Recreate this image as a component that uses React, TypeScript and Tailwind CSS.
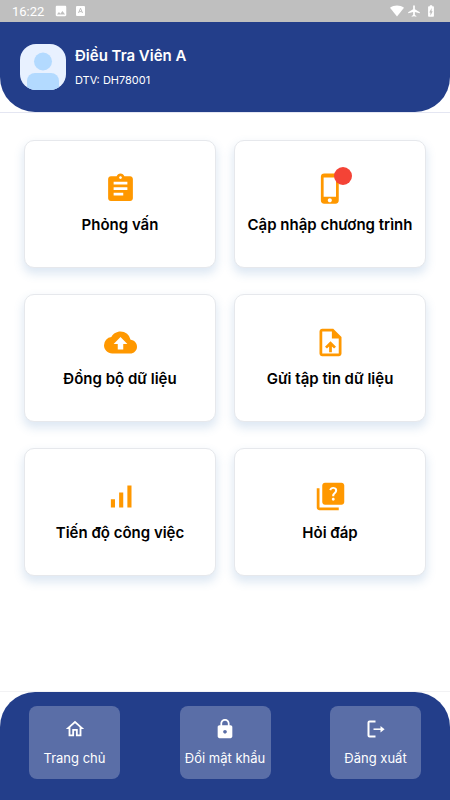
import React from 'react';
import type { IconType } from 'react-icons';
import {
  MdAirplanemodeActive,
  MdAssignment,
  MdBatteryChargingFull,
  MdCloudUpload,
  MdImage,
  MdLock,
  MdOutlineHome,
  MdPhoneIphone,
  MdQuiz,
  MdSignalCellularAlt,
  MdUploadFile,
} from 'react-icons/md';

interface MenuItem {
  label: string;
  icon: IconType;
  hasUpdate?: boolean;
}

const MENU_ITEMS: MenuItem[] = [
  { label: 'Phỏng vấn', icon: MdAssignment },
  { label: 'Cập nhập chương trình', icon: MdPhoneIphone, hasUpdate: true },
  { label: 'Đồng bộ dữ liệu', icon: MdCloudUpload },
  { label: 'Gửi tập tin dữ liệu', icon: MdUploadFile },
  { label: 'Tiến độ công việc', icon: MdSignalCellularAlt },
  { label: 'Hỏi đáp', icon: MdQuiz },
];

const LogoutIcon: React.FC = () => (
  <svg width="22" height="22" viewBox="0 0 22 22" fill="none" stroke="currentColor" strokeWidth="2">
    <path d="M10.500 3.500H4.500a1 1 0 0 0-1 1v13a1 1 0 0 0 1 1h6" />
    <path d="M8.500 11.200H17" strokeWidth="1.500" />
    <path d="M15.500 8 19.600 11.200l-4.100 3.200z" fill="currentColor" stroke="none" />
  </svg>
);

const StatusBar: React.FC = () => (
  <div className="flex h-[22px] items-center justify-between bg-[#bfbfbf] px-3 text-white">
    <div className="flex items-center gap-2.5">
      <span className="font-[Roboto,sans-serif] text-[13px] leading-none">16:22</span>
      <div className="flex items-center gap-1.5">
        <MdImage size={14} />
        <svg width="14" height="14" viewBox="0 0 14 14">
          <rect x="2" y="2" width="9" height="10" rx="1" fill="currentColor" />
          <path d="M4.500 9 6.500 4.200 8.500 9M5.200 7.600h2.600" fill="none" stroke="#bfbfbf" strokeWidth="1" />
        </svg>
      </div>
    </div>
    <div className="flex items-center gap-[3px]">
      <svg width="14" height="14" viewBox="0 0 14 14">
        <path d="M0 3.800C4 .6 10 .6 14 3.800L7 12.500z" fill="currentColor" />
      </svg>
      <MdAirplanemodeActive size={14} />
      <MdBatteryChargingFull size={14} />
    </div>
  </div>
);

const Avatar: React.FC = () => (
  <svg width="46" height="46" viewBox="0 0 46 46" className="rounded-2xl bg-[#e8f1ff]">
    <circle cx="23" cy="17.500" r="9" fill="#b3daff" />
    <path d="M7 46v-9a8 8 0 0 1 8-8h16a8 8 0 0 1 8 8v9z" fill="#b3daff" />
  </svg>
);

const MenuCard: React.FC<{ item: MenuItem }> = ({ item }) => {
  const Icon = item.icon;

  return (
    <button
      type="button"
      className="flex h-32 flex-col items-center gap-2 rounded-[10px] border border-[#e6e8ec] bg-white pt-[31px] shadow-[0_5px_10px_1px_rgba(70,130,190,0.18)]"
    >
      <span className="relative text-[#ff9800]">
        <Icon size={33} />
        {item.hasUpdate && (
          <span className="absolute -top-[5px] -right-[5px] size-[18px] rounded-full bg-[#f44336]" />
        )}
      </span>
      <span className="whitespace-nowrap text-[15px] leading-6 font-semibold text-black">{item.label}</span>
    </button>
  );
};

const NavButton: React.FC<{ label: string; icon: React.ReactNode }> = ({ label, icon }) => (
  <button
    type="button"
    className="flex h-[73px] w-[91px] flex-col items-center gap-2 rounded-lg bg-white/25 pt-3 text-white"
  >
    {icon}
    <span className="whitespace-nowrap text-[13px] leading-5">{label}</span>
  </button>
);

const App: React.FC = () => {
  return (
    <div className="flex min-h-screen flex-col bg-white font-[Inter,'Noto_Sans',sans-serif]">
      <StatusBar />

      <div className="border-b border-[#e4e6f2]">
        <header className="flex items-center gap-[9px] rounded-b-[35px] bg-[#233e8a] px-5 py-[22px] text-white">
          <Avatar />
          <div className="flex flex-col gap-1 pt-0.5">
            <h1 className="text-[15px] leading-5 font-semibold">Điều Tra Viên A</h1>
            <p className="text-[11px] leading-5">DTV: DH78001</p>
          </div>
        </header>
      </div>

      <main className="flex-1 px-6 pt-[27px]">
        <div className="grid grid-cols-2 gap-x-[18px] gap-y-[26px]">
          {MENU_ITEMS.map((item) => (
            <MenuCard key={item.label} item={item} />
          ))}
        </div>
      </main>

      <div className="border-t border-[#f2f2f4]">
        <nav className="flex justify-between rounded-t-[35px] bg-[#233e8a] px-[29px] pt-[14px] pb-[21px]">
          <NavButton label="Trang chủ" icon={<MdOutlineHome size={22} />} />
          <NavButton label="Đổi mật khẩu" icon={<MdLock size={22} />} />
          <NavButton label="Đăng xuất" icon={<LogoutIcon />} />
        </nav>
      </div>
    </div>
  );
};

export default App;
